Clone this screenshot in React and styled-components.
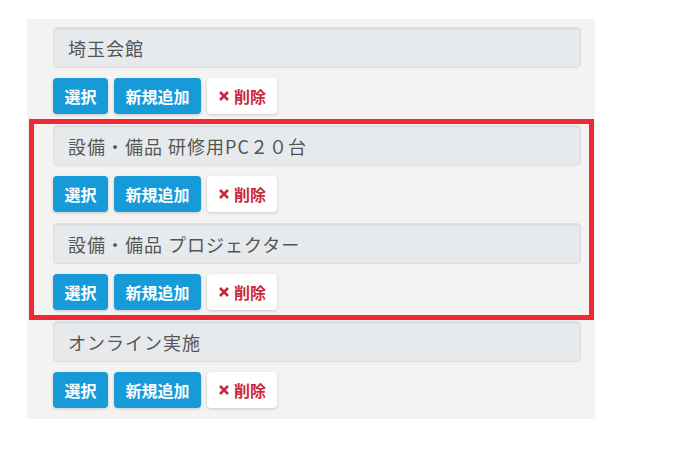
import React from 'react';
import styled, { createGlobalStyle } from 'styled-components';

const GlobalStyle = createGlobalStyle`
  html, body {
    margin: 0;
    padding: 0;
    background: #ffffff;
    font-family: "Noto Sans CJK JP", "Noto Sans", sans-serif;
  }
`;

const Page = styled.div`
  width: 676px;
  height: 450px;
  padding: 19px 0 0 27px;
  box-sizing: border-box;
`;

const Panel = styled.div`
  width: 568px;
  background: #f4f3f1;
  padding: 8px 14px 11px 26px;
  box-sizing: border-box;
  display: flex;
  flex-direction: column;
`;

const Highlight = styled.div`
  position: relative;
  display: flex;
  flex-direction: column;

  &::after {
    content: '';
    position: absolute;
    top: -6px;
    left: -24px;
    right: -13px;
    bottom: 1px;
    border: 5px solid #f32636;
    pointer-events: none;
  }
`;

const Block = styled.div`
  display: flex;
  flex-direction: column;
  gap: 10px;
  margin-bottom: ${(p) => (p.last ? 0 : 11)}px;
`;

const Field = styled.div`
  height: 41px;
  box-sizing: border-box;
  background: #e7eaed;
  border: 1px solid #dde0e3;
  border-radius: 4px;
  box-shadow: inset 0 1px 2px rgba(0, 0, 0, 0.08);
  padding: 0 14px;
  display: flex;
  align-items: center;
  font-size: 18px;
  color: #555555;
  letter-spacing: 1px;
`;

const Actions = styled.div`
  display: flex;
  gap: 6px;
`;

const Button = styled.button`
  height: 36px;
  padding: 0 ${(p) => (p.danger ? 11 : 11.5)}px;
  border: none;
  border-radius: 4px;
  font-family: inherit;
  font-size: 16px;
  font-weight: 700;
  display: inline-flex;
  align-items: center;
  gap: 4px;
  background: ${(p) => (p.danger ? '#ffffff' : '#179ad8')};
  color: ${(p) => (p.danger ? '#c8283b' : '#ffffff')};
  box-shadow: 0 1px 3px rgba(0, 0, 0, 0.18);
  cursor: pointer;
`;

function CrossIcon() {
  return (
    <svg width="12" height="12" viewBox="0 0 12 12">
      <path d="M2 2 L10 10 M10 2 L2 10" stroke="#c8283b" strokeWidth="2.6" strokeLinecap="butt" />
    </svg>
  );
}

function Item({ label, last }) {
  return (
    <Block last={last}>
      <Field>{label}</Field>
      <Actions>
        <Button>選択</Button>
        <Button>新規追加</Button>
        <Button danger>
          <CrossIcon />
          削除
        </Button>
      </Actions>
    </Block>
  );
}

export default function App() {
  return (
    <Page>
      <GlobalStyle />
      <Panel>
        <Item label="埼玉会館" />
        <Highlight>
          <Item label="設備・備品 研修用PC２０台" />
          <Item label="設備・備品 プロジェクター" />
        </Highlight>
        <Item label="オンライン実施" last />
      </Panel>
    </Page>
  );
}
